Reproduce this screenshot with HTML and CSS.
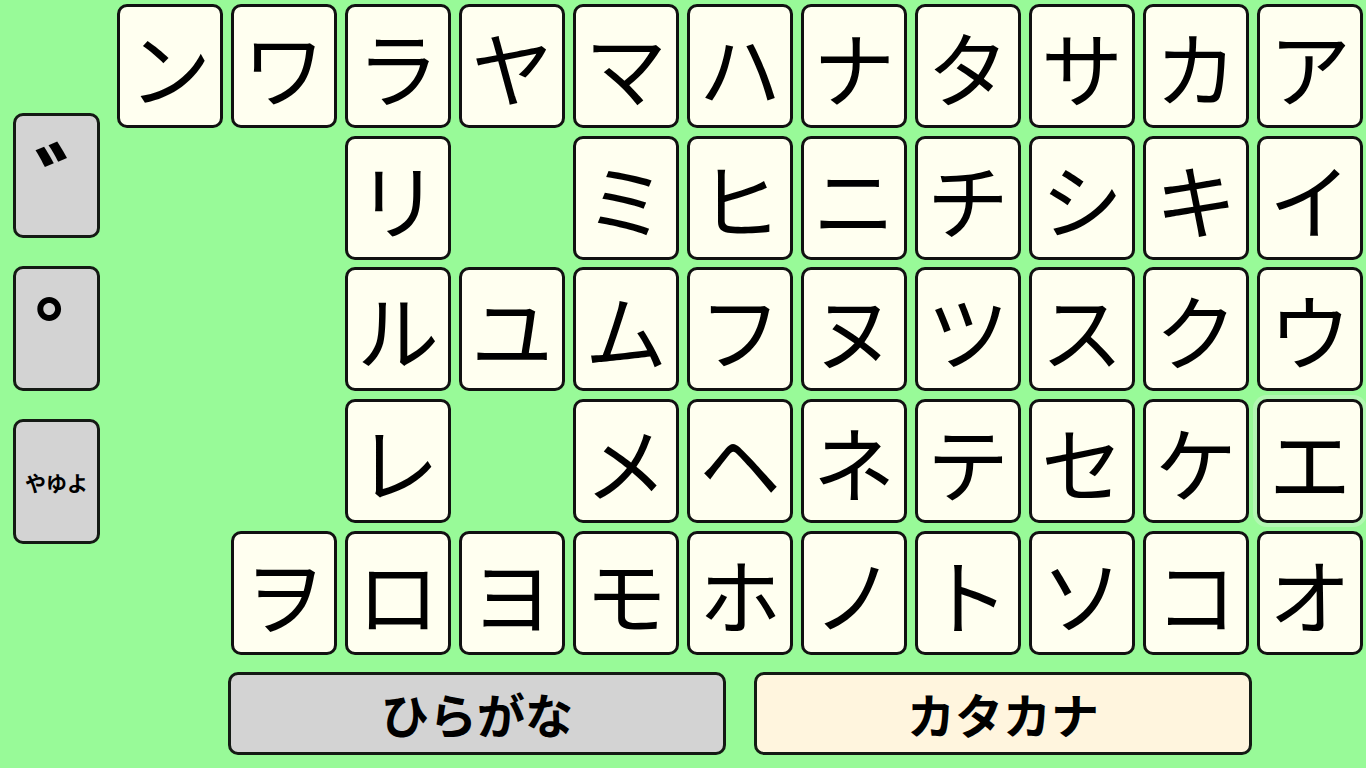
FILE: index.html
```html
<!DOCTYPE html>
<html lang="ja">
<head>
<meta charset="utf-8">
<title>カタカナ</title>
<link rel="stylesheet" href="styles.css">
</head>
<body>
<div class="app">
  <div class="top">
    <div class="side">
      <div class="side-btn mark"><span class="glyph">゛</span></div>
      <div class="side-btn mark"><span class="glyph">゜</span></div>
      <div class="side-btn small">やゆよ</div>
    </div>
    <div class="keys">
      <div class="key">ン</div><div class="key">ワ</div><div class="key">ラ</div><div class="key">ヤ</div><div class="key">マ</div><div class="key">ハ</div><div class="key">ナ</div><div class="key">タ</div><div class="key">サ</div><div class="key">カ</div><div class="key">ア</div>
      <div class="blank"></div><div class="blank"></div><div class="key">リ</div><div class="blank"></div><div class="key">ミ</div><div class="key">ヒ</div><div class="key">ニ</div><div class="key">チ</div><div class="key">シ</div><div class="key">キ</div><div class="key">イ</div>
      <div class="blank"></div><div class="blank"></div><div class="key">ル</div><div class="key">ユ</div><div class="key">ム</div><div class="key">フ</div><div class="key">ヌ</div><div class="key">ツ</div><div class="key">ス</div><div class="key">ク</div><div class="key">ウ</div>
      <div class="blank"></div><div class="blank"></div><div class="key">レ</div><div class="blank"></div><div class="key">メ</div><div class="key">ヘ</div><div class="key">ネ</div><div class="key">テ</div><div class="key">セ</div><div class="key">ケ</div><div class="key hover">エ</div>
      <div class="blank"></div><div class="key">ヲ</div><div class="key">ロ</div><div class="key">ヨ</div><div class="key">モ</div><div class="key">ホ</div><div class="key">ノ</div><div class="key">ト</div><div class="key">ソ</div><div class="key">コ</div><div class="key">オ</div>
    </div>
  </div>
  <div class="bottom">
    <div class="mode hira">ひらがな</div>
    <div class="mode kata">カタカナ</div>
  </div>
</div>
</body>
</html>
```
FILE: styles.css
```css
html, body {
  margin: 0;
  padding: 0;
}
body {
  background: #98fa98;
  font-family: "Noto Sans CJK JP", "Noto Sans", sans-serif;
  width: 1366px;
  height: 768px;
  overflow: hidden;
}
.app {
  display: flex;
  flex-direction: column;
}
.top {
  display: flex;
  align-items: flex-start;
}
.side {
  display: flex;
  flex-direction: column;
  gap: 28px;
  width: 87px;
  margin: 113px 0 0 13px;
}
.side-btn {
  box-sizing: border-box;
  height: 125px;
  background: #d3d3d3;
  border: 3px solid #141a14;
  border-radius: 10px;
  display: flex;
  justify-content: center;
  color: #000;
  font-weight: bold;
}
.side-btn.mark {
  align-items: flex-start;
  padding: 18px 4px 0 0;
}
.glyph {
  display: block;
  font-size: 100px;
  line-height: 1;
  height: 100px;
  letter-spacing: -60px;
  white-space: nowrap;
}
.side-btn.small {
  font-size: 21px;
  align-items: center;
}
.keys {
  display: grid;
  grid-template-columns: repeat(11, 106px);
  grid-template-rows: repeat(5, 124px);
  column-gap: 8px;
  row-gap: 7.7px;
  margin: 4px 0 0 17px;
}
.key {
  box-sizing: border-box;
  background: #fffff0;
  border: 3px solid #111;
  border-radius: 10px;
  display: flex;
  align-items: center;
  justify-content: center;
  font-size: 82px;
  line-height: 1;
  color: #000;
}
.key.hover {
  box-shadow: 0 0 0 4px #b2f7b2;
}
.bottom {
  display: flex;
  gap: 28px;
  margin: 17px 0 0 228px;
}
.mode {
  box-sizing: border-box;
  width: 498px;
  height: 83px;
  border: 3px solid #141a14;
  border-radius: 10px;
  display: flex;
  align-items: center;
  justify-content: center;
  font-size: 48px;
  font-weight: bold;
  color: #000;
}
.hira {
  background: #d3d3d3;
}
.kata {
  background: #fff5de;
}
```
